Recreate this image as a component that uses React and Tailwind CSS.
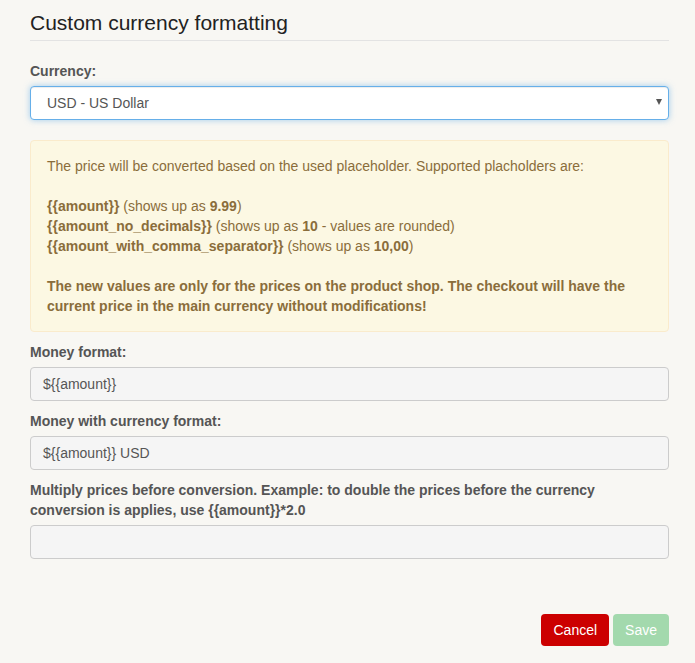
export default function App() {
    return (
        <div className="min-h-[663px] bg-[#f8f7f3] font-['Liberation_Sans',Arial,sans-serif] text-[14px] leading-[20px] text-[#333]">
            <div className="pl-[30px] pr-[26px] pt-[10px]">
                <h3 className="text-[21px] leading-[26px] text-[#222] pb-[4px] border-b border-[#e3e3e3]">Custom currency formatting</h3>

                <div className="mt-[20px]">
                    <label className="block font-bold text-[#555] mb-[5px]">Currency:</label>
                    <div className="relative">
                        <div className="h-[34px] rounded-[4px] border border-[#66afe9] bg-white shadow-[inset_0_1px_1px_rgba(0,0,0,0.075),0_0_6px_rgba(102,175,233,0.6)] flex items-center px-[16px] text-[#555]">
                            USD - US Dollar
                        </div>
                        <span className="absolute right-[7px] top-[13px] w-0 h-0 border-l-[3px] border-r-[3px] border-t-[6px] border-l-transparent border-r-transparent border-t-[#555]"></span>
                    </div>
                </div>

                <div className="mt-[20px] rounded-[4px] border border-[#faebcc] bg-[#fcf8e3] px-[16px] py-[15px] text-[#8a6d3b]">
                    The price will be converted based on the used placeholder. Supported placholders are:
                    <br />
                    <br />
                    <b>{'{{amount}}'}</b> (shows up as <b>9.99</b>)
                    <br />
                    <b>{'{{amount_no_decimals}}'}</b> (shows up as <b>10</b> - values are rounded)
                    <br />
                    <b>{'{{amount_with_comma_separator}}'}</b> (shows up as <b>10,00</b>)
                    <br />
                    <br />
                    <b>The new values are only for the prices on the product shop. The checkout will have the current price in the main currency without modifications!</b>
                </div>

                <div className="mt-[10px]">
                    <label className="block font-bold text-[#555] mb-[5px]">Money format:</label>
                    <div className="h-[34px] rounded-[4px] border border-[#ccc] bg-[#f5f5f5] flex items-center px-[12px] text-[#555]">
                        {'${{amount}}'}
                    </div>
                </div>

                <div className="mt-[10px]">
                    <label className="block font-bold text-[#555] mb-[5px]">Money with currency format:</label>
                    <div className="h-[34px] rounded-[4px] border border-[#ccc] bg-[#f5f5f5] flex items-center px-[12px] text-[#555]">
                        {'${{amount}} USD'}
                    </div>
                </div>

                <div className="mt-[10px]">
                    <label className="block font-bold text-[#555] mb-[5px] pr-[40px]">{'Multiply prices before conversion. Example: to double the prices before the currency conversion is applies, use {{amount}}*2.0'}</label>
                    <div className="h-[34px] rounded-[4px] border border-[#ccc] bg-[#f5f5f5]"></div>
                </div>

                <div className="mt-[55px] flex justify-end gap-[4px]">
                    <button className="h-[32px] px-[12px] rounded-[4px] bg-[#cc0000] text-white text-[14px]">Cancel</button>
                    <button className="h-[32px] px-[12px] rounded-[4px] bg-[#a3d9ad] text-white text-[14px]">Save</button>
                </div>
            </div>
        </div>
    );
}
